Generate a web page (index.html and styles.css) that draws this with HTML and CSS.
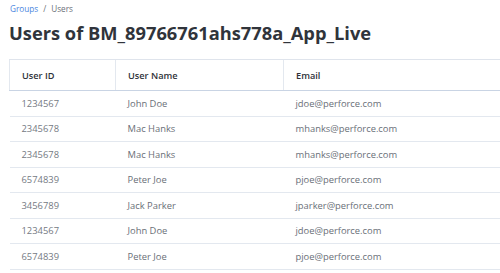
FILE: index.html
```html
<!DOCTYPE html>
<html>
<head>
<meta charset="utf-8">
<link rel="stylesheet" href="styles.css">
</head>
<body>
<div class="page">
  <nav class="crumbs"><a class="crumb-link">Groups</a><span class="sep">/</span><span class="crumb-current">Users</span></nav>
  <h1 class="title">Users of BM_89766761ahs778a_App_Live</h1>
  <table class="users">
    <colgroup><col class="c-id"><col class="c-name"><col class="c-email"></colgroup>
    <thead>
      <tr><th>User ID</th><th>User Name</th><th>Email</th></tr>
    </thead>
    <tbody>
      <tr><td>1234567</td><td>John Doe</td><td>jdoe@perforce.com</td></tr>
      <tr><td>2345678</td><td>Mac Hanks</td><td>mhanks@perforce.com</td></tr>
      <tr><td>2345678</td><td>Mac Hanks</td><td>mhanks@perforce.com</td></tr>
      <tr><td>6574839</td><td>Peter Joe</td><td>pjoe@perforce.com</td></tr>
      <tr><td>3456789</td><td>Jack Parker</td><td>jparker@perforce.com</td></tr>
      <tr><td>1234567</td><td>John Doe</td><td>jdoe@perforce.com</td></tr>
      <tr><td>6574839</td><td>Peter Joe</td><td>pjoe@perforce.com</td></tr>
    </tbody>
  </table>
</div>
</body>
</html>
```
FILE: styles.css
```css
html, body {
  margin: 0;
  padding: 0;
  background: #ffffff;
}
body {
  font-family: "Open Sans", "Noto Sans", sans-serif;
  color: #3c4048;
  overflow: hidden;
}
.page {
  padding: 2px 0 0 9px;
}
.crumbs {
  font-size: 8.2px;
  line-height: 13px;
  height: 13px;
  padding-left: 1px;
  color: #6b7079;
}
.crumb-link {
  color: #4a86e0;
}
.sep {
  margin: 0 5px;
}
.title {
  margin: 4px 0 0 0;
  font-size: 18.3px;
  line-height: 28px;
  font-weight: 700;
  color: #30343b;
  letter-spacing: 0;
}
.users {
  margin-top: 12px;
  width: 491px;
  border-collapse: collapse;
  table-layout: fixed;
  font-size: 9.4px;
}
.c-id { width: 106px; }
.c-name { width: 168px; }
.users th {
  text-align: left;
  font-weight: 600;
  font-size: 9.2px;
  color: #2f333a;
  height: 30px;
  padding: 0 0 0 12px;
  border-top: 1px solid #dfe4ec;
  border-bottom: 1px solid #c9d4e4;
  border-left: 1px solid #e3e8ef;
}
.users td {
  height: 24.5px;
  padding: 0 0 0 12px;
  color: #6a6f78;
  border-bottom: 1px solid #e3e8ef;
}
.users td:first-child {
  color: #757a83;
}
```
